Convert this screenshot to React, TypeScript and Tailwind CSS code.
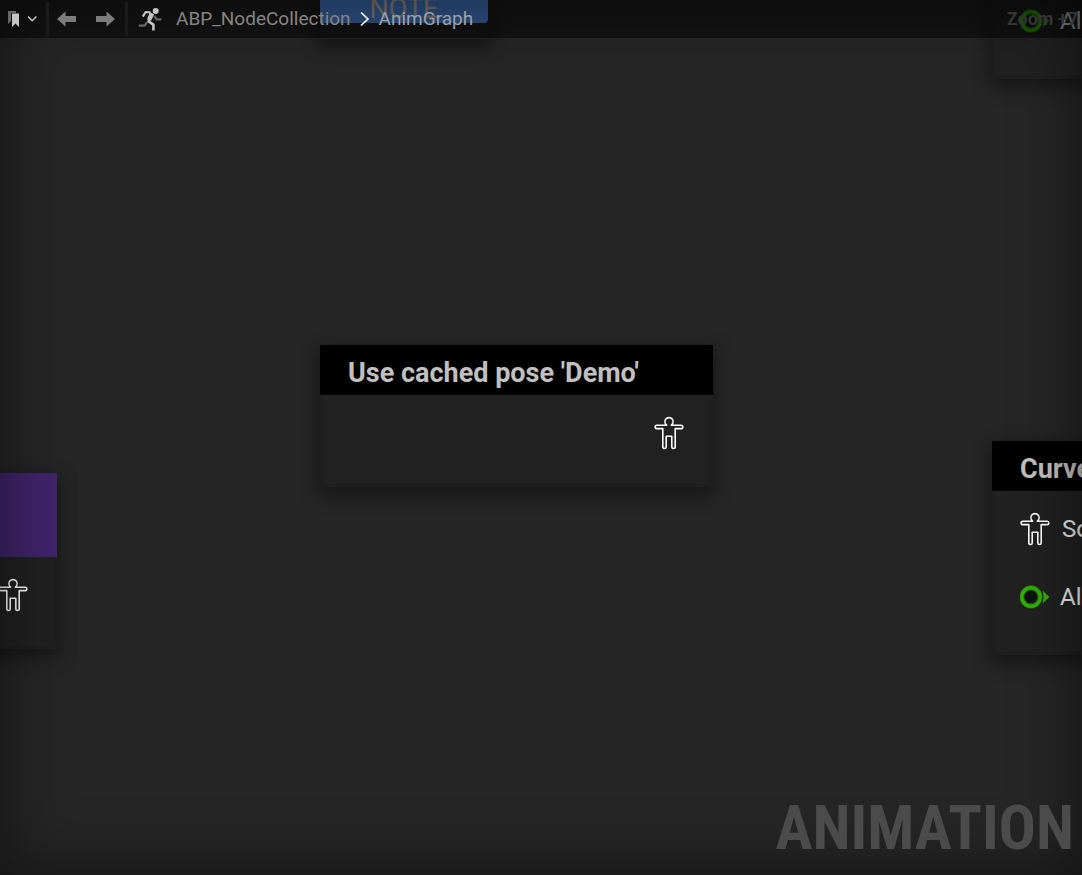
import type { ReactNode } from "react";

function PoseIcon({ className = "" }: { className?: string }) {
  return (
    <svg viewBox="0 0 30 34" className={`h-[34px] w-[30px] shrink-0 ${className}`} fill="none" stroke="currentColor" strokeWidth="1.6" strokeLinejoin="round" aria-hidden="true">
      <path d="M12.6 9.2C10.8 7.6 10.4 4.8 11.8 3C13.3 1.1 16.7 1.1 18.2 3C19.6 4.8 19.2 7.6 17.4 9.2H27.2C29.4 9.2 29.4 12.6 27.2 12.6H21.2V31C21.2 33 17.8 33 17.8 31V20.2H12.2V31C12.2 33 8.8 33 8.8 31V12.6H2.8C0.6 12.6 0.6 9.2 2.8 9.2Z" />
    </svg>
  );
}

function ValuePin() {
  return (
    <svg viewBox="0 0 30 24" className="h-6 w-[30px] shrink-0" aria-hidden="true">
      <circle cx="11" cy="12" r="9" fill="#101410" />
      <circle cx="11" cy="12" r="9" fill="none" stroke="#2a8a0e" strokeOpacity="0.6" strokeWidth="5.4" />
      <circle cx="11" cy="12" r="9.2" fill="none" stroke="#32ae0c" strokeWidth="3.4" />
      <path d="M22.5 5.5L29.5 12L22.5 18.5Q24.5 12 22.5 5.5Z" fill="#32ae0c" />
    </svg>
  );
}

function GraphNode({ className, title, header, children }: { className: string; title?: string; header: string; children?: ReactNode }) {
  return (
    <section className={`absolute shadow-[0_6px_16px_3px_rgba(0,0,0,0.38)] ${className}`}>
      <h2 className={`flex items-center whitespace-nowrap px-7 pt-1.5 text-[27px] leading-none font-bold text-[#c0c0c0] ${header}`}>{title}</h2>
      <div className="border-x-3 border-b-3 border-[#1f1f1f] bg-[#212121]">{children}</div>
    </section>
  );
}

function RunnerIcon() {
  return (
    <svg viewBox="0 0 24 24" className="h-6 w-6" fill="none" aria-hidden="true">
      <path d="M0.8 18.6H6.8L9 15.2M16.5 9L18.6 12.4H23.4" stroke="#686868" strokeWidth="2.2" />
      <circle cx="17.7" cy="3.9" r="3" fill="#c4c4c4" />
      <path d="M4.8 9.6L7.6 5L12.4 5.4" stroke="#c4c4c4" strokeWidth="2.2" strokeLinejoin="round" />
      <path d="M10.6 4.3L16.2 7.6L13.2 13.4L9 12.6L11.4 6.6Z" fill="#c4c4c4" />
      <path d="M11.4 12L10.6 14.4L15.4 17.6V23.4" stroke="#c4c4c4" strokeWidth="2.6" strokeLinejoin="round" />
    </svg>
  );
}

function ArrowIcon({ className = "" }: { className?: string }) {
  return (
    <svg viewBox="0 0 20 16" className={`h-4 w-5 ${className}`} fill="#7d7d7d" aria-hidden="true">
      <path d="M0 8L8.5 0.5V5H19V11H8.5V15.5Z" />
    </svg>
  );
}

export default function App() {
  return (
    <main className="relative flex h-screen flex-col overflow-hidden bg-[#262626] font-['Roboto',sans-serif]">
      <div className="absolute inset-0 overflow-hidden">
        <section className="absolute top-0 left-80 w-[168px] shadow-[0_6px_16px_3px_rgba(0,0,0,0.38)]">
          <div className="flex h-[23px] items-end justify-center rounded-br-sm bg-[#5a9bff] text-[27px] leading-7 text-[#e4dccb]">
            <span>NOTE</span>
          </div>
          <div className="h-4 bg-[#212121]" />
        </section>

        <GraphNode className="-top-20 left-[992px] w-[420px]" header="h-[50px] bg-black">
          <div className="flex h-[106px] items-end gap-[10px] px-[25px] pb-[43px] text-2xl text-[#f4f4f4]">
            <ValuePin />
            <span className="leading-6">Alpha</span>
          </div>
        </GraphNode>

        <GraphNode className="top-[345px] left-80 w-[393px]" title="Use cached pose 'Demo'" header="h-[50px] bg-black">
          <div className="flex h-[89px] justify-end px-[26px] pt-[21px] text-white">
            <PoseIcon />
          </div>
        </GraphNode>

        <GraphNode className="top-[473px] -left-[243px] w-[300px]" header="h-[84px] bg-[#40246c]">
          <div className="flex h-[89px] justify-end px-[26px] pt-[21px] text-white">
            <PoseIcon />
          </div>
        </GraphNode>

        <GraphNode className="top-[441px] left-[992px] w-[420px]" title="Curves" header="h-[50px] bg-black">
          <div className="flex h-[161px] flex-col gap-[39px] px-[25px] pt-[21px] text-2xl leading-6 text-[#ececec]">
            <div className="flex h-[34px] items-center gap-3">
              <PoseIcon className="text-white" />
              <span>Source</span>
            </div>
            <div className="flex h-6 items-center gap-[10px]">
              <ValuePin />
              <span>Alpha</span>
            </div>
          </div>
        </GraphNode>
      </div>

      <div className="pointer-events-none absolute inset-0 shadow-[inset_0_0_64px_2px_rgba(0,0,0,0.5)]" />

      <header className="relative flex h-[38px] shrink-0 items-center bg-black/50 text-[19px] leading-6">
        <button type="button" aria-label="Bookmarks" className="flex h-full w-[46px] items-center gap-2 pl-2">
          <svg viewBox="0 0 12 18" className="h-[18px] w-3" aria-hidden="true">
            <path d="M0 1H8V3H3V11L0 14Z" fill="#686868" />
            <path d="M4 3.5H11V17L7.5 13.5L4 17Z" fill="#c4c4c4" />
          </svg>
          <svg viewBox="0 0 10 8" className="h-2 w-2.5" fill="none" stroke="#c4c4c4" strokeWidth="1.6" aria-hidden="true">
            <path d="M0 1.5L4.2 5.7L8.4 1.5" />
          </svg>
        </button>
        <span className="h-[34px] w-[3px] bg-[#1b1b1b]" />
        <button type="button" aria-label="Back" className="flex h-full w-[38px] items-center pl-2">
          <ArrowIcon />
        </button>
        <button type="button" aria-label="Forward" className="flex h-full w-[38px] items-center pl-2">
          <ArrowIcon className="rotate-180" />
        </button>
        <span className="h-[34px] w-[3px] bg-[#1b1b1b]" />
        <nav aria-label="Breadcrumb" className="flex items-center pl-[10px]">
          <RunnerIcon />
          <a href="#blueprint" className="pl-[14px] text-[#858585]">ABP_NodeCollection</a>
          <svg viewBox="0 0 10 16" className="mx-[9px] h-4 w-2.5" fill="none" stroke="#fff" strokeWidth="1.6" aria-hidden="true">
            <path d="M1 1.5L8 8L1 14.5" />
          </svg>
          <a href="#animgraph" className="text-[#9ba1aa]">AnimGraph</a>
        </nav>
        <span className="ml-auto pr-1 text-lg leading-6 font-bold text-[#343434]">Zoom +7</span>
      </header>

      <div className="relative mt-auto flex justify-end pr-2 pb-4 font-['Roboto_Condensed',Roboto,sans-serif] text-[62px] leading-[62px] font-bold text-[#4b4b4b]">
        ANIMATION
      </div>
    </main>
  );
}
